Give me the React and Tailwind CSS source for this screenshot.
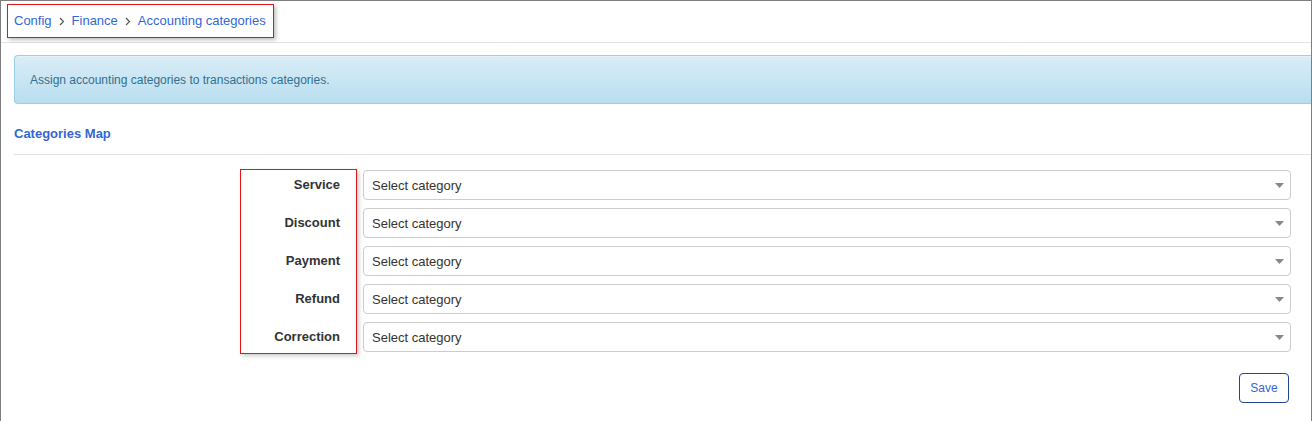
import React from 'react';

const rows = ['Service', 'Discount', 'Payment', 'Refund', 'Correction'];

const Chevron = () => (
  <svg width="6" height="9" viewBox="0 0 6 9" className="mx-[7px]">
    <path d="M1 1l3.5 3.5L1 8" fill="none" stroke="#555" strokeWidth="1.2" />
  </svg>
);

const SelectBox = () => (
  <div className="h-[30px] w-full flex items-center justify-between rounded-[4px] border border-[#cccccc] bg-white pl-[8px] pr-[6px] pt-[2px] text-[13px] text-[#333]">
    <span>Select category</span>
    <svg width="9" height="5" viewBox="0 0 9 5" className="-mt-[2px]">
      <path d="M0 0h9L4.5 5z" fill="#888" />
    </svg>
  </div>
);

export default function App() {
  return (
    <div className="w-[1312px] h-[421px] overflow-hidden bg-white border-l border-t border-r border-[#7f7f7f] font-['Liberation_Sans',Arial,sans-serif]">
      {/* Breadcrumbs */}
      <div className="h-[42px] border-b border-[#e3e3e3] pl-[6px] pt-[3px]">
        <div className="inline-flex items-center h-[34px] pl-[6px] pr-[7px] border border-[#e0161b] shadow-[2px_2px_4px_rgba(0,0,0,0.25)] text-[13px] text-[#3566d6]">
          <span>Config</span>
          <Chevron />
          <span>Finance</span>
          <Chevron />
          <span>Accounting categories</span>
        </div>
      </div>

      {/* Info */}
      <div className="ml-[13px] mt-[12px] h-[49px] flex items-center pl-[15px] rounded-l-[4px] border border-r-0 border-[#9acfea] bg-gradient-to-b from-[#d9edf7] to-[#b9def0] shadow-[inset_0_1px_0_rgba(255,255,255,0.3)] text-[12px] text-[#31708f]">
        Assign accounting categories to transactions categories.
      </div>

      {/* Section */}
      <div className="ml-[13px] mt-[20px] pb-[10px] border-b border-[#e3e3e3]">
        <h3 className="h-[20px] leading-[20px] text-[13px] font-bold text-[#3566d6]">Categories Map</h3>
      </div>

      <div className="flex mt-[14px]">
        <div className="ml-[239px] w-[117px] h-[185px] border border-[#e0161b] shadow-[2px_2px_4px_rgba(0,0,0,0.2)] pr-[16px] pt-[1px] flex flex-col gap-[8px]">
          {rows.map((r) => (
            <div key={r} className="h-[30px] flex items-center justify-end pb-[2px] text-[13px] font-bold text-[#333]">
              {r}
            </div>
          ))}
        </div>
        <div className="flex-1 ml-[6px] mr-[20px] mt-[1px] flex flex-col gap-[8px]">
          {rows.map((r) => (
            <SelectBox key={r} />
          ))}
        </div>
      </div>

      <div className="flex justify-end mr-[22px] mt-[19px]">
        <button className="w-[50px] h-[30px] rounded-[4px] border border-[#24478f] bg-white text-[12px] text-[#3566d6]">
          Save
        </button>
      </div>
    </div>
  );
}
